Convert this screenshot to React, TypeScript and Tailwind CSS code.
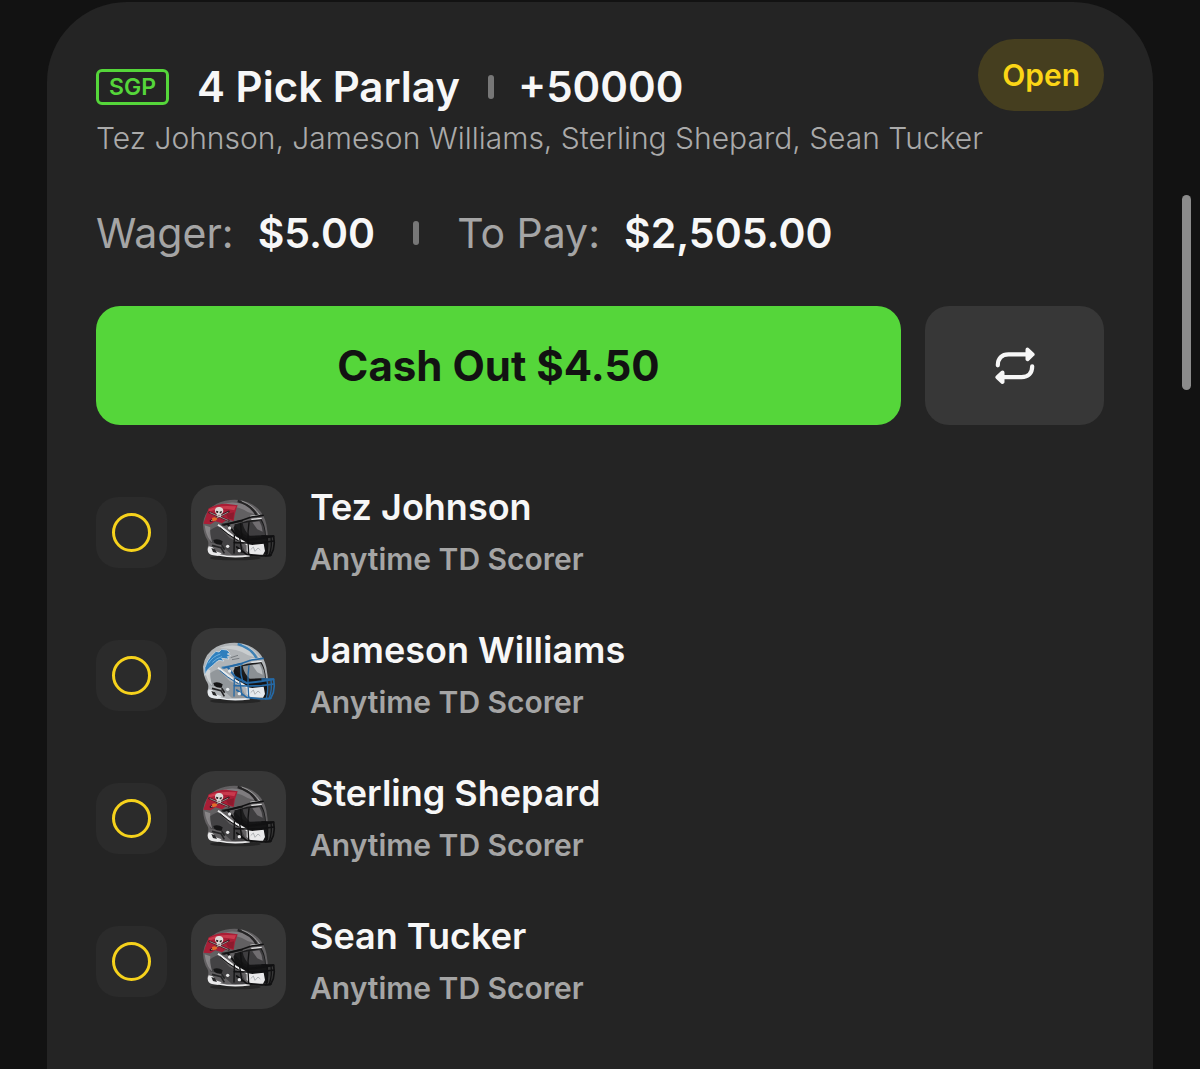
interface Pick {
  id: number
  player: string
  market: string
  team: 'buccaneers' | 'lions'
}

const PICKS: Pick[] = [
  { id: 1, player: 'Tez Johnson', market: 'Anytime TD Scorer', team: 'buccaneers' },
  { id: 2, player: 'Jameson Williams', market: 'Anytime TD Scorer', team: 'lions' },
  { id: 3, player: 'Sterling Shepard', market: 'Anytime TD Scorer', team: 'buccaneers' },
  { id: 4, player: 'Sean Tucker', market: 'Anytime TD Scorer', team: 'buccaneers' },
]

const PALETTES = {
  buccaneers: {
    shell: '#626062',
    shine: '#929092',
    shade: '#434244',
    stripe: '#252425',
    mask: '#111112',
    visor: '#3f3e40',
    trim: '#e9e9ea',
  },
  lions: {
    shell: '#b0b4b7',
    shine: '#dadde0',
    shade: '#92979b',
    stripe: '#3d81b5',
    mask: '#2569a5',
    visor: '#8b9094',
    trim: '#e6eaed',
  },
}

function BuccaneersDecal() {
  return (
    <>
      <path d="M72 146 L88 100 Q112 86 140 86 L175 91 Q166 112 163 138 L144 133 L128 145 L108 139 L94 148 Z" fill="#a91e36" />
      <path d="M88 103 Q116 89 170 94 L165 106 Q128 95 88 110 Z" fill="#c93a4d" />
      <path d="M140 118 L164 112 L162 134 L146 130 Z" fill="#8c1a2d" />
      <path d="M90 112 L148 137 M148 110 L94 138" stroke="#3a1a20" strokeWidth="6" strokeLinecap="round" />
      <path d="M92 113 L146 136 M146 112 L96 137" stroke="#cbbdbf" strokeWidth="2" strokeLinecap="round" />
      <path d="M107 105 Q109 95 120 96 Q132 97 132 108 Q131 116 126 118 L124 126 L113 124 L112 117 Q106 112 107 105 Z" fill="#dddad8" />
      <path d="M110 107 L117 109 L116 114 L111 113 Z M121 110 L128 108 L126 115 L121 115 Z" fill="#2c2425" />
      <path d="M115 121 H123" stroke="#5a4a4a" strokeWidth="2" />
      <path d="M98 129 Q107 124 115 131 Q109 140 99 137 Z" fill="#e46c2a" />
    </>
  )
}

function LionsDecal() {
  return (
    <>
      <path
        d="M77 172 Q72 148 85 129 Q94 114 110 100 L119 102 L127 94 L143 96 L151 104 L144 108 L154 113 L144 116 L149 123 L138 122 L127 121 L134 129 L119 127 Q109 132 101 142 L88 152 Q80 158 77 172 Z"
        fill="#2f7fbd"
        stroke="#e4e9ec"
        strokeWidth="2"
      />
      <path d="M87 136 Q100 115 123 108 M99 133 Q112 120 128 116" stroke="#6eb0dd" strokeWidth="3" fill="none" />
      <path d="M154 119 L176 112 M158 125 L180 121" stroke="#585d63" strokeWidth="2" />
    </>
  )
}

function Helmet({ team }: { team: Pick['team'] }) {
  const c = PALETTES[team]
  return (
    <svg viewBox="35 30 285 285" className="size-full" aria-hidden="true">
      <ellipse cx="168" cy="249" rx="76" ry="7" fill="#252525" />

      {/* inside of the helmet, seen through the face opening */}
      <path d="M158 147 L232 120 L266 180 L266 236 L232 244 L190 238 Z" fill="#151516" />

      {/* shell */}
      <path
        d="M71 146 Q76 105 112 86 Q142 72 178 75 Q215 80 237 102 Q255 120 261 148 L266 182 L252 180 L242 136 L204 143 L168 148 L162 159 L170 193 L202 206 L208 241 Q178 247 148 242 L103 241 Q86 237 84 219 Q90 206 84 194 Q72 176 71 146 Z"
        fill={c.shell}
      />
      <path d="M86 173 Q96 159 118 153 L150 188 L186 206 L202 240 L158 240 L122 208 L94 203 Z" fill={c.shade} />
      <path d="M118 90 Q154 76 190 87 Q216 95 232 120 L205 111 Q178 92 118 90 Z" fill={c.shine} opacity="0.6" />
      <path d="M76 151 Q79 178 91 194 L99 204 Q90 174 93 157 Z" fill={c.shine} opacity="0.8" />
      <path d="M175 78 Q217 89 234 125" fill="none" stroke={c.stripe} strokeWidth="7" />
      <path d="M187 78 Q222 91 241 120" fill="none" stroke={c.trim} strokeWidth="3" opacity="0.5" />

      {team === 'lions' ? <LionsDecal /> : <BuccaneersDecal />}

      {/* visor */}
      <path d="M164 149 L203 137 L246 132 Q258 149 260 184 L203 183 L184 172 Z" fill="#1b1b1c" />
      <path d="M190 145 L244 136 Q256 153 257 180 L211 182 Q194 167 190 145 Z" fill={c.visor} />
      <path d="M219 142 L240 139 Q249 153 250 170 L234 163 Z" fill={c.shine} opacity="0.6" />

      {/* ear hole and padding */}
      <path d="M102 195 Q116 189 130 199 L127 209 Q113 211 105 203 Z" fill="#151516" />
      <path d="M88 214 L100 217 L109 229 L127 235 L117 243 L98 240 Q84 237 85 222 Z" fill={c.trim} />
      <path d="M96 219 L107 223 L113 234 L101 231 Z" fill="#252526" />
      <path d="M119 240 Q159 249 211 242" fill="none" stroke={c.trim} strokeWidth="5" />
      <path d="M98 211 L125 218 L135 235 M127 211 L136 224" fill="none" stroke="#242425" strokeWidth="5" />

      {/* chin cup */}
      <path d="M202 207 L219 210 L253 206 L257 228 L251 239 L213 239 L202 227 Z" fill={c.trim} />
      <path d="M214 224 L222 216 L227 229 L236 219 L243 225" fill="none" stroke="#aeb1b4" strokeWidth="3" />

      {/* straps */}
      <path d="M116 149 L134 163 L159 182 L190 199 L207 210" fill="none" stroke={c.trim} strokeWidth="6" />
      <path d="M121 157 L145 177 L178 198" fill="none" stroke={c.mask} strokeWidth="3" />
      <path d="M127 149 L153 145 L190 137" fill="none" stroke={c.stripe} strokeWidth="6" />
      <path d="M213 124 L243 121 M216 133 L247 130" stroke={c.trim} strokeWidth="4" />

      {/* face mask */}
      <g fill="none" stroke={c.mask} strokeLinecap="round" strokeLinejoin="round">
        <path d="M134 150 L184 137 L216 126 L251 121" strokeWidth="5" />
        <path d="M146 149 L168 177 L202 195 L246 190 L282 184" strokeWidth="6" />
        <path d="M165 203 L202 204 L247 203 L284 198" strokeWidth="5" />
        <path d="M172 216 L202 238 L247 243 L274 241" strokeWidth="5" />
        <path d="M248 183 L283 183 Q287 203 282 224 L274 241 L258 243" strokeWidth="5" />
        <path d="M263 187 Q268 213 261 241 M275 186 Q279 213 270 240" strokeWidth="4" />
        <path d="M184 145 Q183 170 191 193 M209 143 Q205 169 206 198 L208 236" strokeWidth="4" />
        <path d="M165 181 L164 234 M181 189 L188 232" strokeWidth="4" />
      </g>
      <g fill={c.trim}>
        <circle cx="151" cy="159" r="5" />
        <circle cx="145" cy="214" r="5" />
        <circle cx="180" cy="227" r="5" />
      </g>
    </svg>
  )
}

function RepeatIcon() {
  return (
    <svg width="40" height="40" viewBox="0 0 40 40" fill="none" aria-hidden="true">
      <g stroke="#f7f7f7" strokeWidth="4.2" strokeLinecap="round" strokeLinejoin="round">
        <path d="M2.8 19.3 C2.8 12.3 6.8 8.4 13.5 8.4 H32" />
        <path d="M37.2 20.3 C37.2 27.3 33.2 31.2 26.5 31.2 H8" />
      </g>
      <g fill="#f7f7f7" stroke="#f7f7f7" strokeWidth="4" strokeLinejoin="round">
        <path d="M32.5 3.6 L37.6 8.4 L32.5 13.2 Z" />
        <path d="M7.5 26.4 L2.4 31.2 L7.5 36 Z" />
      </g>
    </svg>
  )
}

function Divider() {
  return <span className="h-6 w-1.5 rounded-sm bg-[#777]" />
}

function PickRow({ pick }: { pick: Pick }) {
  return (
    <li className="flex items-center gap-6">
      <div className="flex size-[71px] shrink-0 items-center justify-center rounded-[22px] bg-[#2b2b2b]">
        <span className="size-[39px] rounded-full border-3 border-[#f6d21c]" />
      </div>
      <div className="size-[95px] shrink-0 overflow-hidden rounded-3xl bg-[#373737]">
        <Helmet team={pick.team} />
      </div>
      <div className="pt-0.5">
        <h2 className="text-[36px] leading-[52px] font-semibold text-[#f7f7f7]">{pick.player}</h2>
        <p className="text-[30px] leading-[52px] font-semibold text-[#a5a5a5]">{pick.market}</p>
      </div>
    </li>
  )
}

export default function App() {
  return (
    <div className="relative flex min-h-screen flex-col bg-[#121212] px-[47px] pt-0.5 font-['Inter',sans-serif]">
      <main className="flex-1 rounded-t-[80px] bg-[#242424] px-[49px] pt-[37px]">
        <header className="flex items-start justify-between">
          <div className="flex items-center pt-5">
            <span className="flex h-9 items-center rounded-md border-3 border-[#55d63a] px-2.5 text-[23px] font-semibold text-[#55d63a]">
              SGP
            </span>
            <h1 className="ml-7 text-[42px] leading-[56px] font-semibold text-[#f7f7f7]">4 Pick Parlay</h1>
            <div className="mr-6 ml-7 flex">
              <Divider />
            </div>
            <span className="text-[42px] leading-[56px] font-semibold text-[#f7f7f7]">+50000</span>
          </div>
          <span className="rounded-full bg-[#453e1f] px-6 text-[30px] leading-[72px] font-semibold text-[#fbd516]">
            Open
          </span>
        </header>
        <p className="text-[30px] leading-[46px] font-light text-[#aaa]">
          Tez Johnson, Jameson Williams, Sterling Shepard, Sean Tucker
        </p>

        <dl className="mt-11 flex items-center text-[41px] leading-[56px]">
          <dt className="text-[#a5a5a5]">Wager:</dt>
          <dd className="ml-6 font-semibold text-[#f7f7f7]">$5.00</dd>
          <dd className="mx-[38px] flex">
            <Divider />
          </dd>
          <dt className="text-[#a5a5a5]">To Pay:</dt>
          <dd className="ml-6 font-semibold text-[#f7f7f7]">$2,505.00</dd>
        </dl>

        <div className="mt-[45px] flex gap-6">
          <button
            type="button"
            className="h-[119px] flex-1 rounded-3xl bg-[#55d63a] text-[42px] font-bold text-[#121212]"
          >
            Cash Out $4.50
          </button>
          <button
            type="button"
            aria-label="Repeat bet"
            className="flex h-[119px] w-[179px] items-center justify-center rounded-3xl bg-[#373737]"
          >
            <RepeatIcon />
          </button>
        </div>

        <ul className="mt-[54px] flex flex-col gap-[37px] pb-10">
          {PICKS.map(pick => (
            <PickRow key={pick.id} pick={pick} />
          ))}
        </ul>
      </main>

      {/* scroll indicator */}
      <div className="absolute top-[195px] right-[9px] h-[195px] w-[9px] rounded-full bg-[#8b8b8b]" />
    </div>
  )
}
